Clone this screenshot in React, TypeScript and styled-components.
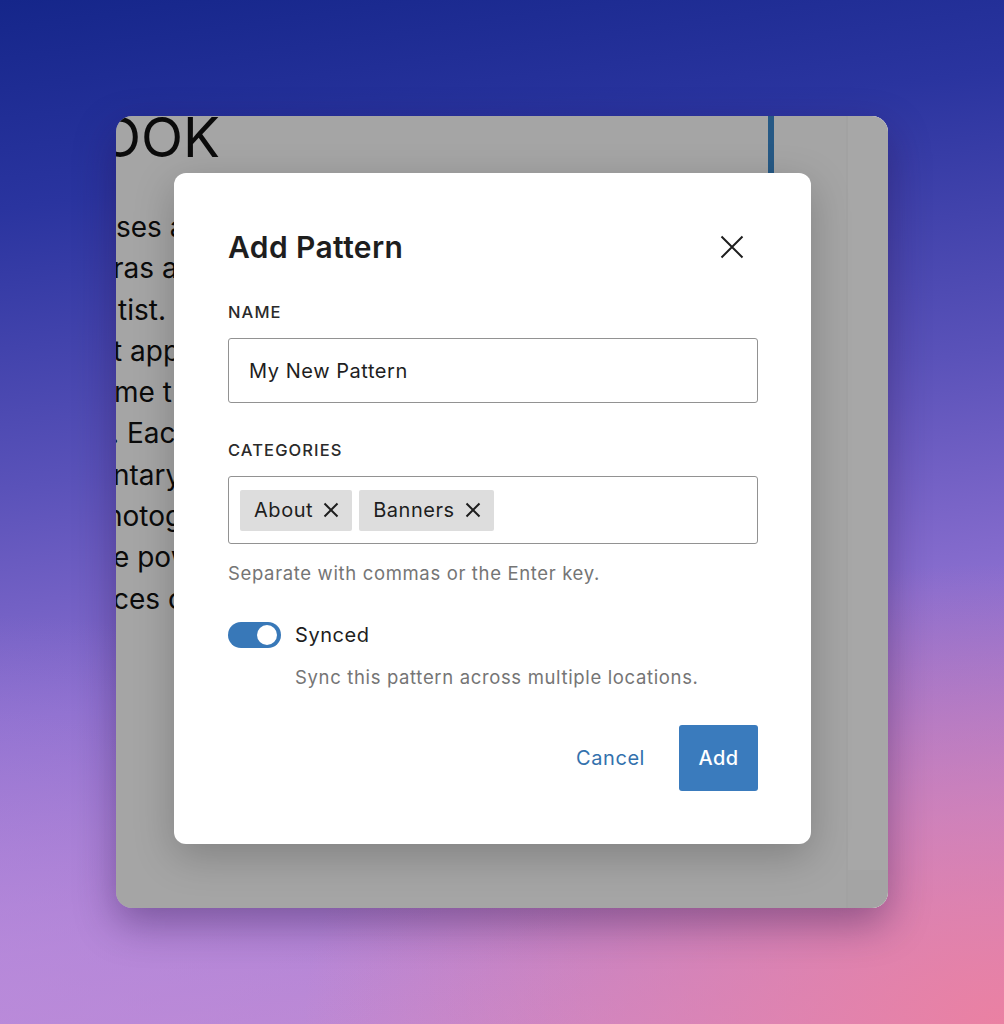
import React from "react";
import styled, { createGlobalStyle } from "styled-components";

const Global = createGlobalStyle`
  html, body { margin: 0; padding: 0; }
  body { font-family: Inter, "Noto Sans", "Liberation Sans", sans-serif; }
  * { box-sizing: border-box; }
`;

const Page = styled.div`
  width: 1004px;
  height: 1024px;
  padding: 116px;
  background:
    radial-gradient(ellipse 70% 45% at 100% 100%, rgba(236, 128, 160, 0.95), rgba(236, 128, 160, 0) 100%),
    radial-gradient(ellipse 60% 40% at 0% 100%, rgba(186, 140, 220, 0.7), rgba(186, 140, 220, 0) 100%),
    linear-gradient(172deg, #15268a 0%, #2a349f 18%, #5a52b9 42%, #8a6ecf 62%, #b083d6 82%, #c98bcf 100%);
`;

const Window = styled.div`
  position: relative;
  height: 792px;
  border-radius: 16px;
  overflow: hidden;
  display: grid;
  grid-template-columns: 1fr 42px;
  background: #fcfcfc;
  box-shadow: 0 16px 40px rgba(40, 15, 70, 0.4);
`;

const Main = styled.div`
  position: relative;
  overflow: hidden;
  font-family: Inter, "Noto Sans", sans-serif;
  color: #111;
`;

const Heading = styled.div`
  margin: -6px 0 0 -53px;
  font-size: 55px;
  line-height: 55px;
  font-weight: 400;
  white-space: nowrap;
`;

const Paragraph = styled.div`
  margin-top: 42px;
`;

const Line = styled.div<{ $shift: number }>`
  margin-left: ${(p) => p.$shift}px;
  font-size: 28px;
  line-height: 41.3px;
  white-space: nowrap;
`;

const Caret = styled.div`
  position: absolute;
  left: 652px;
  top: 0;
  width: 6px;
  height: 58px;
  background: #3a88cc;
`;

const Sidebar = styled.div`
  display: flex;
  flex-direction: column;
  border-left: 2px solid #f7f7f7;
`;

const SidebarBody = styled.div`
  flex: 1;
  background: #ffffff;
`;

const SidebarFoot = styled.div`
  height: 38px;
  background: #fafafa;
`;

const Overlay = styled.div`
  position: absolute;
  inset: 0;
  background: rgba(0, 0, 0, 0.345);
`;

const Modal = styled.div`
  position: absolute;
  left: 58px;
  top: 57px;
  width: 637px;
  background: #fff;
  border-radius: 12px;
  padding: 54px 53px 53px 54px;
  box-shadow: 0 12px 40px rgba(0, 0, 0, 0.22);
  color: #1e1e1e;
  font-family: Inter, "Noto Sans", sans-serif;
  letter-spacing: 0.55px;
`;

const Header = styled.div`
  display: flex;
  align-items: center;
  justify-content: space-between;
  height: 40px;
  margin-bottom: 35px;
`;

const Title = styled.h1`
  margin: 0;
  font-size: 30px;
  font-weight: 600;
  line-height: 40px;
  letter-spacing: 0.4px;
`;

const CloseButton = styled.button`
  border: 0;
  background: none;
  padding: 0;
  width: 24px;
  height: 24px;
  margin-right: 14px;
  display: flex;
  color: #1e1e1e;
`;

const Label = styled.div`
  font-size: 16.5px;
  line-height: 20px;
  font-weight: 500;
  text-transform: uppercase;
  letter-spacing: 1.1px;
  margin-bottom: 16px;
  color: #2a2a2a;
`;

const Field = styled.div<{ $h: number }>`
  height: ${(p) => p.$h}px;
  border: 1.5px solid #929292;
  border-radius: 3px;
  display: flex;
  align-items: center;
  gap: 7px;
  padding: 0 11px;
  font-size: 20px;
`;

const InputText = styled.span`
  padding-left: 9px;
`;

const Section = styled.div<{ $gap: number }>`
  margin-bottom: ${(p) => p.$gap}px;
`;

const Token = styled.span`
  display: inline-flex;
  align-items: center;
  height: 41px;
  padding: 0 12px 0 14px;
  gap: 9px;
  background: #dddddd;
  border-radius: 2px;
  font-size: 20px;
`;

const Help = styled.div<{ $indent?: number }>`
  margin: 17px 0 0 ${(p) => p.$indent ?? 0}px;
  font-size: 18.5px;
  line-height: 24px;
  color: #757575;
  letter-spacing: 0.65px;
`;

const ToggleRow = styled.div`
  display: flex;
  align-items: center;
  gap: 14px;
  height: 26px;
  margin-top: 37px;
  font-size: 20px;
`;

const Track = styled.span`
  position: relative;
  width: 53px;
  height: 26px;
  border-radius: 13px;
  background: #3878b8;
`;

const Knob = styled.span`
  position: absolute;
  right: 4px;
  top: 3px;
  width: 20px;
  height: 20px;
  border-radius: 50%;
  background: #fff;
`;

const Footer = styled.div`
  display: flex;
  justify-content: flex-end;
  align-items: center;
  gap: 16px;
  margin-top: 36px;
`;

const TextButton = styled.button`
  border: 0;
  background: none;
  font: inherit;
  font-size: 20px;
  letter-spacing: 0.55px;
  color: #3371ad;
  padding: 0 18px;
  height: 66px;
`;

const PrimaryButton = styled.button`
  border: 0;
  border-radius: 3px;
  background: #3a7bbd;
  color: #fff;
  font: inherit;
  font-size: 20px;
  font-weight: 500;
  letter-spacing: 0.4px;
  width: 79px;
  height: 66px;
`;

const XIcon = ({ size, stroke, inset }: { size: number; stroke: number; inset: number }) => (
  <svg width={size} height={size} viewBox={`0 0 ${size} ${size}`} fill="none">
    <path
      d={`M${inset} ${inset} L${size - inset} ${size - inset} M${size - inset} ${inset} L${inset} ${size - inset}`}
      stroke="currentColor"
      strokeWidth={stroke}
    />
  </svg>
);

const lines: [string, number][] = [
  ["ses a", 0],
  ["ras a", -3],
  ["tist. I", 2],
  ["t app", -3],
  ["me t", -2],
  [". Each", -5],
  ["ntary", -3],
  ["hotog", -10],
  ["e pow", -3],
  ["ces o", -3],
];

export default function App() {
  return (
    <>
      <Global />
      <Page>
        <Window>
          <Main>
            <Heading>BOOK</Heading>
            <Paragraph>
              {lines.map(([t, s]) => (
                <Line key={t} $shift={s}>
                  {t}
                </Line>
              ))}
            </Paragraph>
            <Caret />
          </Main>
          <Sidebar>
            <SidebarBody />
            <SidebarFoot />
          </Sidebar>
          <Overlay />
          <Modal>
            <Header>
              <Title>Add Pattern</Title>
              <CloseButton aria-label="Close">
                <XIcon size={24} stroke={2} inset={1.5} />
              </CloseButton>
            </Header>
            <Section $gap={37}>
              <Label>Name</Label>
              <Field $h={65}>
                <InputText>My New Pattern</InputText>
              </Field>
            </Section>
            <Section $gap={0}>
              <Label>Categories</Label>
              <Field $h={68}>
                <Token>
                  About
                  <XIcon size={18} stroke={2} inset={2.5} />
                </Token>
                <Token>
                  Banners
                  <XIcon size={18} stroke={2} inset={2.5} />
                </Token>
              </Field>
              <Help>Separate with commas or the Enter key.</Help>
            </Section>
            <ToggleRow>
              <Track>
                <Knob />
              </Track>
              Synced
            </ToggleRow>
            <Help $indent={67}>Sync this pattern across multiple locations.</Help>
            <Footer>
              <TextButton>Cancel</TextButton>
              <PrimaryButton>Add</PrimaryButton>
            </Footer>
          </Modal>
        </Window>
      </Page>
    </>
  );
}
